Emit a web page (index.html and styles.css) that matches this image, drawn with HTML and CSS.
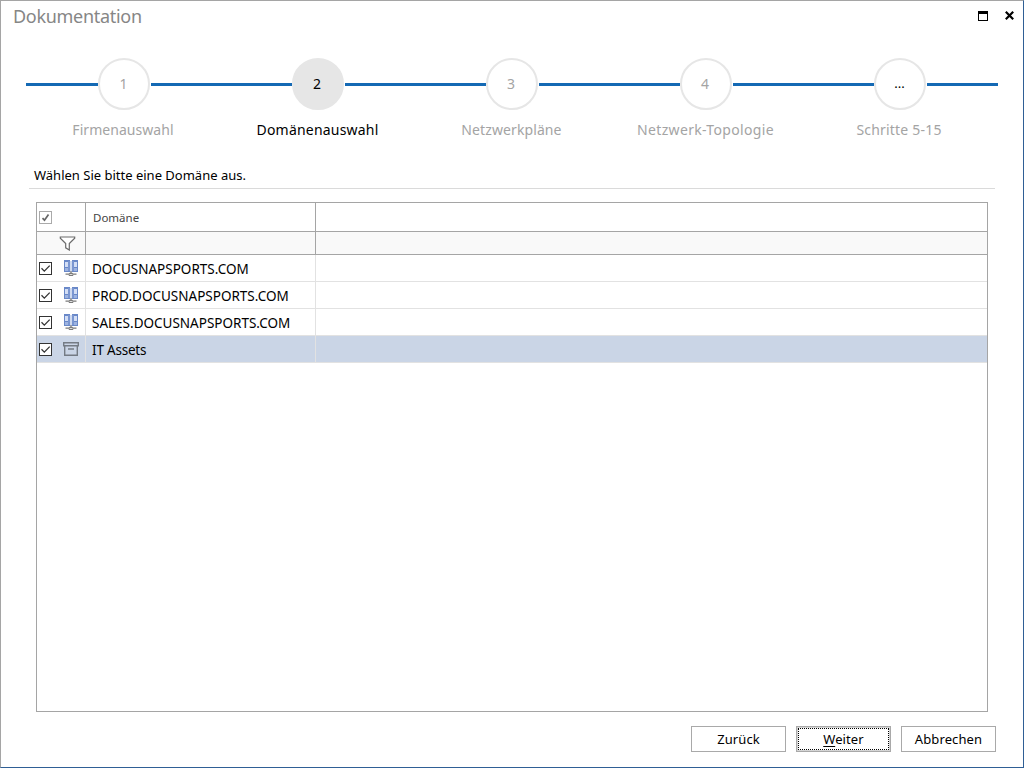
FILE: index.html
```html
<!DOCTYPE html>
<html lang="de">
<head>
<meta charset="utf-8">
<title>Dokumentation</title>
<link rel="stylesheet" href="styles.css">
</head>
<body>
<svg class="defs" width="0" height="0" aria-hidden="true">
  <symbol id="check" viewBox="0 0 13 13"><rect x=".5" y=".5" width="12" height="12" fill="#fff" stroke="#333"/><path d="M2.500 6.300 5.300 9.100 10.700 3.600" fill="none" stroke="#333" stroke-width="1.300"/></symbol>
  <symbol id="domain" viewBox="0 0 16 16"><path d="M1 0h6v12H1zM9 0h6v12H9z" fill="#6988c8"/><path d="M2 2h3v5H2zM11 2h3v5h-3z" fill="#d3def5"/><path d="M2 8h3v3H2zM11 8h3v3h-3z" fill="#9db3e0"/><path d="M5.500 1h1v10h-1zM9.500 1h1v10h-1z" fill="#8ba4d9"/><path d="M7 1h2v11H7z" fill="#cfdaf0"/><path d="M7.400 11h1.200v2.500H7.400z" fill="#777"/><path d="M2.500 14.200h3.300L7 13.300h2l1.200.9h3.300M5.800 15.300h4.400" fill="none" stroke="#7b7b7b" stroke-width="1.200"/></symbol>
</svg>
<div class="window">
  <header class="titlebar">
    <h1 class="title"><span>Dokumentation</span></h1>
    <div class="controls">
      <svg width="10" height="10" viewBox="0 0 10 10"><path d="M0 0h10v10H0zM1 3v6h8V3z" fill="#000" fill-rule="evenodd"/></svg>
      <svg width="9" height="9" viewBox="0 0 9 9"><path d="M.8 .8 8.200 8.200M8.200 .8 .8 8.200" stroke="#000" stroke-width="2.200"/></svg>
    </div>
  </header>
  <ol class="steps">
    <li class="step"><div class="track"><i></i><b class="num">1</b><i></i></div><span class="label l1">Firmenauswahl</span></li>
    <li class="step active"><div class="track"><i></i><b class="num">2</b><i></i></div><span class="label l2">Domänenauswahl</span></li>
    <li class="step"><div class="track"><i></i><b class="num">3</b><i></i></div><span class="label l3">Netzwerkpläne</span></li>
    <li class="step"><div class="track"><i></i><b class="num">4</b><i></i></div><span class="label l4">Netzwerk-Topologie</span></li>
    <li class="step"><div class="track"><i></i><b class="num dots">...</b><i></i></div><span class="label l5">Schritte 5-15</span></li>
  </ol>
  <p class="prompt"><span>Wählen Sie bitte eine Domäne aus.</span></p>
  <main class="grid">
    <div class="row head">
      <div class="cell pick"><svg width="13" height="13" viewBox="0 0 13 13"><rect x=".5" y=".5" width="12" height="12" fill="#fff" stroke="#aaa"/><path d="M3.500 7.200 5.500 9.200 9.500 3.500" fill="none" stroke="#666" stroke-width="1.700"/></svg></div>
      <div class="cell name"><span>Domäne</span></div><div class="cell"></div>
    </div>
    <div class="row filter">
      <div class="cell pick"><svg class="funnel" width="17" height="15" viewBox="0 0 17 15"><path d="M1.300 1h14.400v1.200L10.300 7.500v6.500L6.700 11.800V7.500L1.300 2.200z" fill="#fff" stroke="#6a6a6a" stroke-width="1.200"/></svg></div>
      <div class="cell"></div><div class="cell"></div>
    </div>
    <div class="row"><div class="cell pick"><svg width="13" height="13"><use href="#check"/></svg><svg width="16" height="16"><use href="#domain"/></svg></div><div class="cell name"><span>DOCUSNAPSPORTS.COM</span></div><div class="cell"></div></div>
    <div class="row"><div class="cell pick"><svg width="13" height="13"><use href="#check"/></svg><svg width="16" height="16"><use href="#domain"/></svg></div><div class="cell name"><span>PROD.DOCUSNAPSPORTS.COM</span></div><div class="cell"></div></div>
    <div class="row"><div class="cell pick"><svg width="13" height="13"><use href="#check"/></svg><svg width="16" height="16"><use href="#domain"/></svg></div><div class="cell name"><span>SALES.DOCUSNAPSPORTS.COM</span></div><div class="cell"></div></div>
    <div class="row selected"><div class="cell pick"><svg width="13" height="13"><use href="#check"/></svg><svg width="16" height="16" viewBox="0 0 16 16"><path d="M.7 1.700h14.600v3H.7zM1.700 4.700h12.600v9.600H1.700zM5 8h6" fill="none" stroke="#747b84" stroke-width="1.400"/></svg></div><div class="cell name"><span class="asset">IT Assets</span></div><div class="cell"></div></div>
  </main>
  <footer class="actions">
    <button class="btn"><span>Zurück</span></button>
    <button class="btn primary"><span><u>W</u>eiter</span></button>
    <button class="btn"><span>Abbrechen</span></button>
  </footer>
</div>
</body>
</html>
```
FILE: styles.css
```css
* { box-sizing: border-box; }
body { margin: 0; background: #fff; font-family: "Noto Sans", "Open Sans", sans-serif; font-size: 13px; color: #000; }
.defs { display: none; }
.window { width: 1024px; height: 768px; display: flex; flex-direction: column; border: 1px solid #a5a5a5; border-right-color: #2f5f95; border-bottom-color: #2f5f95; background: #fff; overflow: hidden; }
span { white-space: nowrap; }
.titlebar { height: 57px; flex: none; display: flex; justify-content: space-between; padding: 2px 9px 0 12px; }
.title { margin: 0; font-size: 18px; line-height: 26px; font-weight: 400; color: #868686; }
.title span { letter-spacing: -.3px; }
.controls { display: flex; gap: 17px; padding-top: 8px; }
.steps { list-style: none; margin: 0; padding: 0 25px; height: 104px; flex: none; display: grid; grid-template-columns: 195px 194px 194px 194px 195px; }
.step { display: flex; flex-direction: column; align-items: center; color: #a4a4a4; }
.track { width: 100%; height: 52px; display: flex; align-items: center; }
.track i { flex: 1; height: 3px; background: #1469b4; margin-top: 1px; }
.step:first-child .track i:first-child { flex: 0 0 72px; }
.step:last-child .track i:last-child { flex: 0 0 71px; }
.num { flex: none; width: 52px; height: 52px; border: 2px solid #e6e6e6; border-radius: 50%; display: flex; align-items: center; justify-content: center; font-weight: 400; font-size: 14px; padding: 0 1px 2px 0; margin-right: 1px; }
.num.dots { color: #000; font-size: 13px; }
.active, .active .num { color: #000; }
.active .num { background: #e6e6e6; }
.label { font-size: 14px; line-height: 20px; margin: 10px 1px 0 0; }
.l1 { letter-spacing: .05px; }
.l2 { letter-spacing: .2px; }
.l3 { letter-spacing: .1px; }
.l4 { letter-spacing: .33px; }
.l5 { letter-spacing: .2px; margin-right: 3px; }
.prompt { margin: 0 28px; padding: 3px 0 0 5px; height: 27px; flex: none; line-height: 20px; border-bottom: 1px solid #dadada; }
.grid { flex: none; margin: 13px 35px 0; height: 510px; border: 1px solid #a5a5a5; }
.row { display: grid; grid-template-columns: 49px 230px 1fr; height: 27px; border-bottom: 1px solid #e2e2e2; }
.cell { display: flex; align-items: center; border-right: 1px solid #e2e2e2; }
.cell:last-child { border-right: 0; }
.pick { padding-left: 2px; gap: 11px; }
.name { padding-left: 6px; line-height: 20px; padding-top: 1px; font-size: 13.5px; }
.asset { letter-spacing: -.2px; }
.head { height: 29px; border-color: #a5a5a5; }
.head .cell, .filter .cell { border-color: #a5a5a5; }
.head .pick { padding-top: 1px; }
.head .name { font-size: 11.5px; color: #444; padding: 2px 0 0 7px; }
.filter { height: 23px; border-color: #a5a5a5; background: #f9f9f9; }
.funnel { margin-left: 20px; }
.selected { background: #cad5e6; }
.actions { display: flex; justify-content: flex-end; gap: 10px; padding: 14px 27px 0; }
.btn { width: 95px; height: 26px; padding: 0 0 1px; border: 1px solid #a9a9a9; border-radius: 0; background: #fff; font: 13px/20px "Noto Sans", "Open Sans", sans-serif; letter-spacing: .1px; color: #000; }
.primary { box-shadow: inset 0 0 0 1px #d5d5d5; outline: 1px dotted #000; outline-offset: -3px; }
u { text-underline-offset: 2px; }
```
